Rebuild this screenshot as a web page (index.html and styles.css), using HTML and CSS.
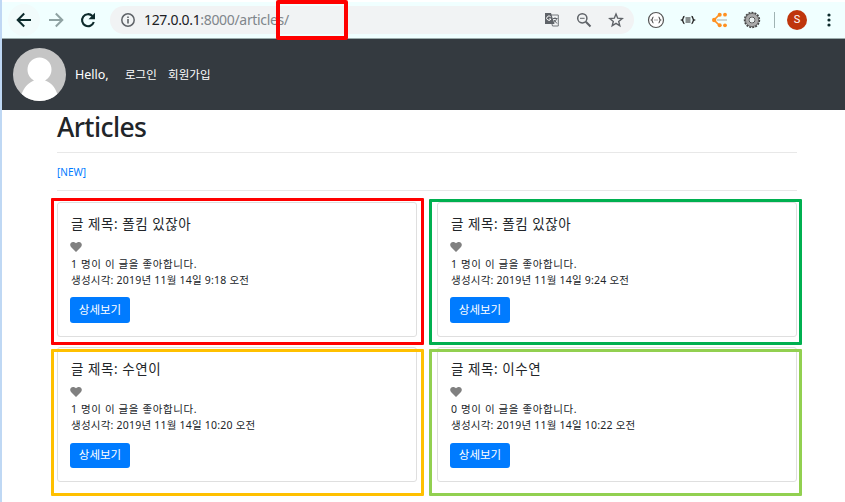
FILE: index.html
```html
<!DOCTYPE html>
<html lang="ko">
<head>
<meta charset="utf-8">
<title>Articles</title>
<link rel="stylesheet" href="styles.css">
</head>
<body>
<div class="window">
  <header class="toolbar">
    <span class="back"><svg width="32" height="32" viewBox="0 0 32 32" fill="none" stroke="#0d2b2c" stroke-width="2"><path d="M23 16H10M16.2 9.5L9.7 16l6.5 6.5"/></svg></span>
    <svg class="fwd" width="32" height="32" viewBox="0 0 32 32" fill="none" stroke="#8fa3a3" stroke-width="2"><path d="M9 16h13M15.8 9.5l6.5 6.5-6.5 6.5"/></svg>
    <svg class="reload" width="32" height="32" viewBox="0 0 32 32"><path d="M20.4 12A6 6 0 1 0 21.8 18" fill="none" stroke="#0d2b2c" stroke-width="2.1"/><path d="M23 8.8V15.3H16.5z" fill="#0d2b2c"/></svg>
    <div class="address">
      <svg class="info" width="16" height="16" viewBox="0 0 16 16"><circle cx="8" cy="8" r="6.2" fill="none" stroke="#5f6368" stroke-width="1.5"/><path d="M7.2 7h1.6v4.5H7.2zM7.2 4.4h1.6V6H7.2z" fill="#5f6368"/></svg>
      <span class="url"><b>127.0.0.1</b>:8000/articles/</span>
      <svg class="translate" width="16" height="16" viewBox="0 0 16 16"><path d="M5.5 3h8.8v11H8.5z" fill="#f1f3f4" stroke="#74787c"/><path d="M1 1h6l3.500 11H1z" fill="#5f6368"/><path d="M6.700 4.800A2.200 2.200 0 1 0 7 7H5" fill="none" stroke="#fff"/><path d="M9 6.500h4.500M11 5.300v1.200M12.700 6.500c-.6 2-1.700 3.300-3 4M10 8l3 3.500" fill="none" stroke="#5f6368"/></svg>
      <svg class="lens" width="16" height="16" viewBox="0 0 16 16" fill="none" stroke="#5f6368"><circle cx="6.300" cy="6.300" r="4.600" stroke-width="1.500"/><path d="M9.800 9.800l4.700 4.700" stroke-width="2"/><path d="M4 6.300h4.600"/></svg>
      <svg class="star" width="16" height="16" viewBox="0 0 16 16" fill="none" stroke="#5f6368" stroke-width="1.400"><path d="M8 2l1.700 4.200 4.500.3-3.500 2.900 1.100 4.400L8 11.400l-3.800 2.400 1.100-4.400-3.500-2.900 4.500-.3z"/></svg>
    </div>
    <svg class="ext" width="18" height="18" viewBox="0 0 18 18" fill="none" stroke="#555"><circle cx="9" cy="9" r="7.500" fill="#fff" stroke-width="1.200"/><path d="M6.500 6c-1.500 0-.4 2.300-2 3 1.600.7.500 3 2 3M11.500 6c1.500 0 .4 2.300 2 3-1.600.7-.5 3-2 3" stroke-width="1.200"/><path d="M7.500 9h3" stroke-dasharray="1 1"/></svg>
    <svg class="ext" width="18" height="18" viewBox="0 0 18 18" fill="none" stroke="#222" stroke-width="1.400"><path d="M5.500 5.500c-2.200 0-.5 2.700-2.500 3.500 2 .8.300 3.500 2.500 3.500M12.500 5.500c2.200 0 .5 2.700 2.500 3.500-2 .8-.3 3.500-2.500 3.500"/><path d="M6.500 7h5M6.500 9h5M6.500 11h5" stroke-width="1"/></svg>
    <svg class="ext" width="18" height="18" viewBox="0 0 18 18"><path d="M8.500 3.500L3 9l5.500 5.500" fill="none" stroke="#ff9020" stroke-width="1.700"/><g fill="#ff9020"><circle cx="3.200" cy="9" r="2.200"/><circle cx="8.700" cy="3.700" r="2"/><circle cx="8.700" cy="14.300" r="2"/><circle cx="14" cy="3.700" r="1.900"/><circle cx="14" cy="14.300" r="1.900"/></g><path d="M6 9h10" stroke="#a9aaa5"/></svg>
    <svg class="ext" width="18" height="18" viewBox="0 0 18 18" fill="none"><circle cx="9" cy="9" r="7.300" stroke="#444" stroke-width="1.800" stroke-dasharray="2 1.057"/><circle cx="9" cy="9" r="5" stroke="#aaa" stroke-width="3.500"/><circle cx="9" cy="9" r="6.600" stroke="#555" stroke-width=".8"/><circle cx="9" cy="9" r="3" stroke="#555"/><circle cx="9" cy="9" r="2.300" fill="#e8eeee"/></svg>
    <span class="divider"></span>
    <span class="profile">S</span>
    <svg class="menu" width="4" height="14" viewBox="0 0 4 14" fill="#0d2b2c"><circle cx="2" cy="2" r="1.600"/><circle cx="2" cy="7" r="1.600"/><circle cx="2" cy="12" r="1.600"/></svg>
  </header>
  <nav class="navbar">
    <svg class="avatar" width="53" height="53" viewBox="0 0 53 53"><defs><clipPath id="round"><circle cx="26.500" cy="26.500" r="26.500"/></clipPath></defs><g clip-path="url(#round)"><path d="M0 0h53v53H0z" fill="#c5c5c5"/><path d="M8 53v-5C11 38 17 34 21 32.500c-4-2.200-6.500-6.300-6.500-11a12 12 0 0 1 24 0c0 4.700-2.500 8.800-6.500 11C37 34 42 38 45 48v5z" fill="#fff"/></g></svg>
    <span class="hello">Hello,</span>
    <a class="login">로그인</a>
    <a class="signup">회원가입</a>
  </nav>
  <main class="container">
    <h1>Articles</h1>
    <hr>
    <a class="new">[NEW]</a>
    <hr>
    <div class="cards">
      <article class="card mark-red">
        <h2>글 제목: 폴킴 있잖아</h2>
        <svg class="heart" width="12" height="11" viewBox="0 0 12 11"><path d="M6 11L1 6C-1 3.500 1 1 3 1c1.400 0 2.400.6 3 1.300C6.600 1.600 7.600 1 9 1c2 0 4 2.500 2 5z"/></svg>
        <p class="likes">1 명이 이 글을 좋아합니다.</p>
        <p class="time">생성시각: 2019년 11월 14일 9:18 오전</p>
        <a class="btn">상세보기</a>
      </article>
      <article class="card mark-green">
        <h2>글 제목: 폴킴 있잖아</h2>
        <svg class="heart" width="12" height="11" viewBox="0 0 12 11"><path d="M6 11L1 6C-1 3.500 1 1 3 1c1.400 0 2.400.6 3 1.300C6.600 1.600 7.600 1 9 1c2 0 4 2.500 2 5z"/></svg>
        <p class="likes">1 명이 이 글을 좋아합니다.</p>
        <p class="time">생성시각: 2019년 11월 14일 9:24 오전</p>
        <a class="btn">상세보기</a>
      </article>
      <article class="card mark-yellow">
        <h2>글 제목: 수연이</h2>
        <svg class="heart" width="12" height="11" viewBox="0 0 12 11"><path d="M6 11L1 6C-1 3.500 1 1 3 1c1.400 0 2.400.6 3 1.300C6.600 1.600 7.600 1 9 1c2 0 4 2.500 2 5z"/></svg>
        <p class="likes">1 명이 이 글을 좋아합니다.</p>
        <p class="time">생성시각: 2019년 11월 14일 10:20 오전</p>
        <a class="btn short">상세보기</a>
      </article>
      <article class="card mark-lime">
        <h2>글 제목: 이수연</h2>
        <svg class="heart" width="12" height="11" viewBox="0 0 12 11"><path d="M6 11L1 6C-1 3.500 1 1 3 1c1.400 0 2.400.6 3 1.300C6.600 1.600 7.600 1 9 1c2 0 4 2.500 2 5z"/></svg>
        <p class="likes">0 명이 이 글을 좋아합니다.</p>
        <p class="time">생성시각: 2019년 11월 14일 10:22 오전</p>
        <a class="btn short">상세보기</a>
      </article>
    </div>
  </main>
</div>
<div class="url-mark"></div>
</body>
</html>
```
FILE: styles.css
```css
*, *::after { box-sizing: border-box; }
body {
  margin: 0;
  height: 502px;
  overflow: hidden;
  background: #fff;
  color: #212529;
  font-family: "Noto Sans", "Noto Sans CJK KR", sans-serif;
}
svg { display: block; flex: none; }
.window {
  height: 502px;
  padding-top: 2px;
  border-left: 2px solid #bfd8f4;
}
.toolbar {
  display: flex;
  align-items: center;
  height: 37px;
  padding-left: 6px;
  background: #f0ffff;
  border-bottom: 1px solid #9aabab;
}
.back { border-radius: 50%; background: #f1fbfb; }
.address {
  display: flex;
  align-items: center;
  flex: none;
  width: 524px;
  height: 28px;
  margin-left: 6px;
  padding-left: 10px;
  border-radius: 14px;
  background: #f1f3f4;
}
.url {
  width: 146px;
  margin-left: 8px;
  color: #80868b;
  font-size: 14px;
  letter-spacing: -0.33px;
  line-height: 20px;
  white-space: nowrap;
}
.url b { color: #202124; font-weight: 400; }
.translate { margin-left: 254px; }
.lens, .star { margin-left: 16px; }
.address + .ext { margin-left: 13px; }
.ext + .ext { margin-left: 14px; }
.divider { width: 1px; height: 16px; margin-left: 13px; background: #9fb3b3; }
.profile {
  width: 20px;
  height: 20px;
  margin-left: 12px;
  border-radius: 50%;
  background: #bf360c;
  color: #fff;
  font: 11px/20px Roboto, sans-serif;
  text-align: center;
}
.menu { margin-left: 20px; }
.navbar {
  display: flex;
  align-items: center;
  height: 71px;
  padding-left: 11px;
  background: #343a40;
  color: #fff;
  font-size: 11.5px;
  white-space: nowrap;
}
.hello { width: 50px; margin-left: 9px; font-size: 12.5px; }
.login { width: 43px; }
.signup { letter-spacing: 0.1px; }
.login, .signup { margin-top: -1px; }
.container { width: 740px; margin-left: 55px; }
h1 { margin: 0; font-size: 26.5px; line-height: 34px; font-weight: 500; letter-spacing: -0.6px; }
hr { height: 1px; margin: 0; border: 0; background: #e8e8e8; }
h1 + hr { margin-top: 8px; }
.new { display: block; margin: 11px 0 10px; color: #007bff; font-size: 10px; line-height: 16px; }
.cards { display: grid; grid-template-columns: 360px 360px; grid-auto-rows: 135px; gap: 10px 20px; margin-top: 11px; }
.card { position: relative; padding: 11px 12px 0 13px; border: 1px solid #dfdfdf; border-radius: 3px; }
.card::after { content: ""; position: absolute; left: -7px; width: 373px; height: 147px; border: 3px solid; border-radius: 1px; }
.card:nth-child(even)::after { left: -9px; }
.mark-red::after { top: -5px; border-color: #f00; }
.mark-green::after { top: -4px; height: 146px; border-color: #00b050; }
.mark-yellow::after { top: 1px; border-color: #ffc000; }
.mark-lime::after { top: 1px; border-color: #92d050; }
h2 { margin: 0; font-size: 13.5px; line-height: 20px; font-weight: 400; letter-spacing: 0.55px; }
.heart { margin: 7px 0 0 -1px; fill: #808080; }
p { margin: 0; font-size: 10.5px; line-height: 16px; white-space: nowrap; }
.likes { margin-top: 4px; letter-spacing: 0.62px; }
.time { letter-spacing: 0.22px; }
.btn {
  display: block;
  width: 60px;
  height: 26px;
  margin: 9px 0 0 -1px;
  border-radius: 3px;
  background: #007bff;
  color: #fff;
  font-size: 11.5px;
  line-height: 26px;
  text-align: center;
}
.short { height: 25px; margin-top: 10px; line-height: 24px; }
.url-mark { position: absolute; left: 276px; top: 0; width: 72px; height: 40px; border: 4px solid #f00; border-radius: 2px; }
```
